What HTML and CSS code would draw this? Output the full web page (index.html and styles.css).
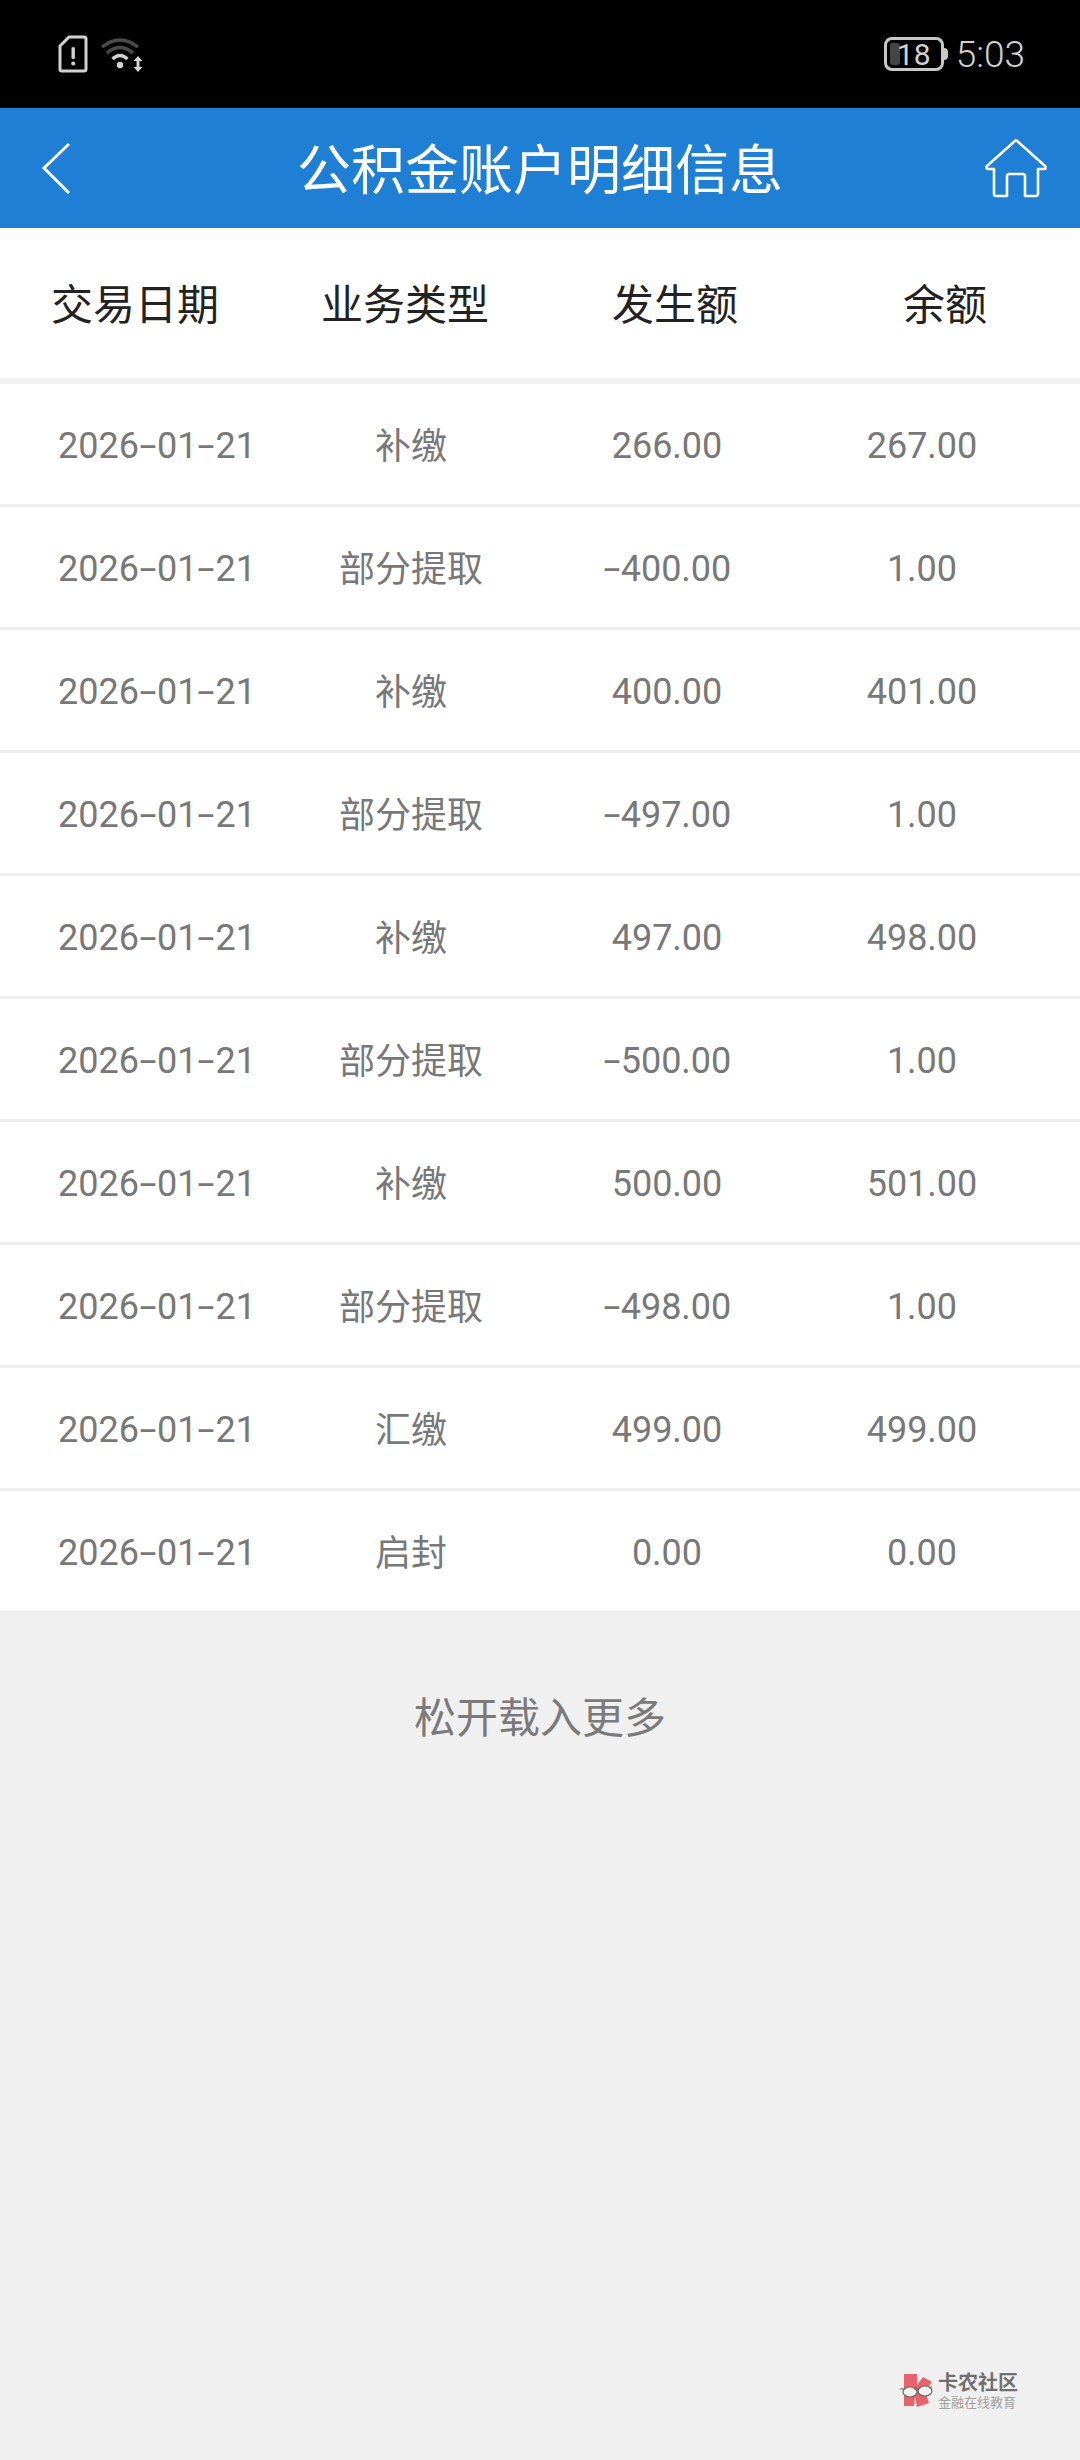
FILE: index.html
```html
<!DOCTYPE html>
<html>
<head>
  <title>公积金账户明细信息</title>
  <link rel="stylesheet" href="styles.css">
</head>
<body>
  <div class="status-bar">
    <div class="status-left">
      <svg class="sim-icon" width="30" height="38" viewBox="0 0 30 38">
        <path d="M11 2H26Q28 2 28 4V34Q28 36 26 36H4Q2 36 2 34V11Z" fill="none" stroke="#d2d2d2" stroke-width="3" stroke-linejoin="round"/>
        <rect x="13.5" y="12" width="3.4" height="12" rx="1.5" fill="#d2d2d2"/>
        <circle cx="15.2" cy="28.5" r="2" fill="#d2d2d2"/>
      </svg>
      <svg class="wifi-icon" width="46" height="36" viewBox="0 0 46 36">
        <path d="M2 11Q20 -3 38 11" fill="none" stroke="#4a4a4a" stroke-width="3.4"/>
        <path d="M7 17Q20 6 33 17" fill="none" stroke="#4a4a4a" stroke-width="3.4"/>
        <path d="M12.5 23Q20 16 27.5 23" fill="none" stroke="#d2d2d2" stroke-width="3.4"/>
        <circle cx="20" cy="29" r="3.2" fill="#d2d2d2"/>
        <path d="M38 20L42.500 25H33.500Z M38 36L42.500 31H33.500Z" fill="#d2d2d2"/>
        <rect x="36.500" y="24" width="3" height="8" fill="#d2d2d2"/>
      </svg>
    </div>
    <div class="status-right">
      <div class="battery">
        <span class="battery-level"></span>
        <span class="battery-text">18</span>
      </div>
      <span class="battery-tip"></span>
      <span class="clock">5:03</span>
    </div>
  </div>

  <header class="title-bar">
    <svg class="back-icon" width="32" height="54" viewBox="0 0 32 54">
      <path d="M28 3L3 27L28 52" fill="none" stroke="#fff" stroke-width="3"/>
    </svg>
    <h1>公积金账户明细信息</h1>
    <svg class="home-icon" width="64" height="62" viewBox="0 0 64 62">
      <path d="M32 3L61 29Q63 32 60 32H54V57Q54 59 52 59H41V39Q41 37 39 37H25Q23 37 23 39V59H12Q10 59 10 57V32H4Q1 32 3 29Z" fill="none" stroke="#fff" stroke-width="2.600" stroke-linejoin="round"/>
    </svg>
  </header>

  <div class="table-head">
    <span>交易日期</span>
    <span>业务类型</span>
    <span>发生额</span>
    <span>余额</span>
  </div>

  <div class="rows">
    <div class="row"><span>2026<i>-</i>01<i>-</i>21</span><span>补缴</span><span>266.00</span><span>267.00</span></div>
    <div class="row"><span>2026<i>-</i>01<i>-</i>21</span><span>部分提取</span><span><i>-</i>400.00</span><span>1.00</span></div>
    <div class="row"><span>2026<i>-</i>01<i>-</i>21</span><span>补缴</span><span>400.00</span><span>401.00</span></div>
    <div class="row"><span>2026<i>-</i>01<i>-</i>21</span><span>部分提取</span><span><i>-</i>497.00</span><span>1.00</span></div>
    <div class="row"><span>2026<i>-</i>01<i>-</i>21</span><span>补缴</span><span>497.00</span><span>498.00</span></div>
    <div class="row"><span>2026<i>-</i>01<i>-</i>21</span><span>部分提取</span><span><i>-</i>500.00</span><span>1.00</span></div>
    <div class="row"><span>2026<i>-</i>01<i>-</i>21</span><span>补缴</span><span>500.00</span><span>501.00</span></div>
    <div class="row"><span>2026<i>-</i>01<i>-</i>21</span><span>部分提取</span><span><i>-</i>498.00</span><span>1.00</span></div>
    <div class="row"><span>2026<i>-</i>01<i>-</i>21</span><span>汇缴</span><span>499.00</span><span>499.00</span></div>
    <div class="row"><span>2026<i>-</i>01<i>-</i>21</span><span>启封</span><span>0.00</span><span>0.00</span></div>
  </div>

  <p class="load-more">松开载入更多</p>

  <div class="watermark">
    <svg width="36" height="36" viewBox="0 0 36 36">
      <path d="M5 1H18V12L24 4L33 9L26 18L30 30L18 34L16 24L15 33H5Z" fill="#e8636a"/>
      <path d="M1 16L20 15L33 14" fill="none" stroke="#666" stroke-width="1.200"/>
      <ellipse cx="11" cy="19" rx="7" ry="5" fill="#f2f2f2" stroke="#666" stroke-width="1.200"/>
      <ellipse cx="26" cy="18" rx="7" ry="5" fill="#f2f2f2" stroke="#666" stroke-width="1.200"/>
    </svg>
    <div class="watermark-text">
      <span class="watermark-name">卡农社区</span>
      <span class="watermark-sub">金融在线教育</span>
    </div>
  </div>
</body>
</html>
```

FILE: styles.css
```css
* {
  box-sizing: border-box;
}

body {
  margin: 0;
  width: 1080px;
  height: 2460px;
  position: relative;
  overflow: hidden;
  background-color: #f0f0f0;
  font-family: Roboto, "Noto Sans CJK SC", sans-serif;
}

.status-bar {
  height: 108px;
  background-color: #000;
  display: flex;
  justify-content: space-between;
  align-items: center;
  padding: 0 55px 0 58px;
}

.status-left {
  display: flex;
  align-items: center;
  gap: 12px;
}

.status-right {
  display: flex;
  align-items: center;
  color: #d2d2d2;
}

.battery {
  width: 60px;
  height: 34px;
  border: 3px solid #c8c8c8;
  border-radius: 8px;
  position: relative;
  display: flex;
  align-items: center;
  justify-content: center;
}

.battery-level {
  position: absolute;
  left: 3px;
  top: 3px;
  bottom: 3px;
  width: 10px;
  border-radius: 3px;
  background-color: #444;
}

.battery-text {
  position: relative;
  font-size: 30px;
}

.battery-tip {
  width: 4px;
  height: 12px;
  margin-right: 8px;
  background-color: #c8c8c8;
  border-radius: 0 4px 4px 0;
}

.clock {
  font-size: 37px;
  font-weight: 300;
}

.title-bar {
  height: 120px;
  background-color: #1f7fd4;
  display: flex;
  align-items: center;
  justify-content: space-between;
  padding: 0 32px 0 41px;
}

.title-bar h1 {
  margin: 0 0 3px;
  color: #fff;
  font-size: 54px;
  font-weight: 400;
  position: absolute;
  left: 0;
  width: 1080px;
  text-align: center;
}

.table-head {
  height: 150px;
  padding-bottom: 3px;
  background-color: #fff;
  display: grid;
  grid-template-columns: repeat(4, 270px);
  align-items: center;
  text-align: center;
  font-size: 42px;
  color: #222;
}

.rows {
  margin-top: 6px;
}

.row {
  height: 123px;
  padding-top: 4px;
  background-color: #fff;
  border-bottom: 3px solid #eeeeee;
  display: grid;
  grid-template-columns: 314px 194px 318px 192px;
  align-items: center;
  text-align: center;
  font-size: 36px;
  color: #787878;
}

.row span:nth-child(2) {
  margin-bottom: 7px;
}

/* the dash in the reference is wider than a roboto hyphen */
.row i {
  display: inline-block;
  width: 18px;
  font-style: normal;
  transform: scaleX(1.7);
}

.row:last-child {
  height: 120px;
  border-bottom: none;
}

.load-more {
  margin: 73px 0 0;
  text-align: center;
  font-size: 42px;
  color: #7a7a7a;
}

.watermark {
  position: absolute;
  left: 899px;
  top: 2373px;
  display: flex;
  align-items: center;
  gap: 3px;
}

.watermark-text {
  display: flex;
  flex-direction: column;
  line-height: 1;
}

.watermark-name {
  font-size: 20px;
  font-weight: 700;
  color: #707070;
}

.watermark-sub {
  margin-top: 3px;
  font-size: 13px;
  color: #a0a0a0;
}
```
